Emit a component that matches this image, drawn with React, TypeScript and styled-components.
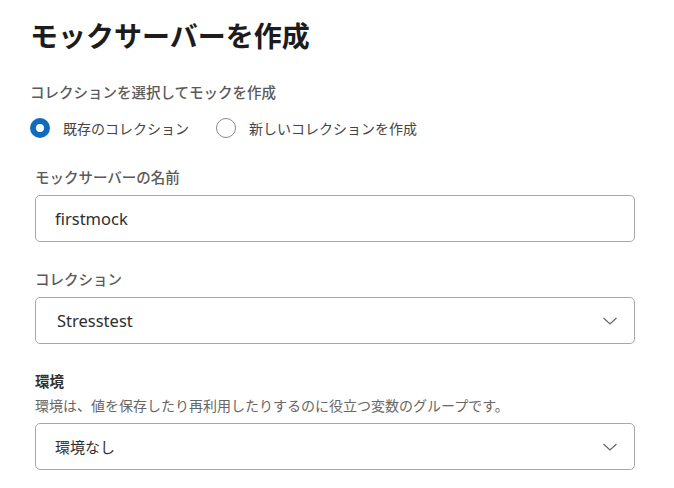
import React, { useState } from 'react';
import styled, { createGlobalStyle } from 'styled-components';

const GlobalStyle = createGlobalStyle`
  body {
    margin: 0;
    background: #ffffff;
    font-family: "Noto Sans", "Noto Sans CJK JP", sans-serif;
  }
`;

const Page = styled.div`
  padding: 17px 0 0 30px;
  width: 605px;
`;

const Title = styled.h1`
  margin: 0;
  font-size: 28px;
  line-height: 36px;
  font-weight: 700;
  color: #1c1c1c;
  font-family: "Noto Sans CJK JP", sans-serif;
`;

const SubHeading = styled.div`
  margin-top: 29px;
  font-size: 14.5px;
  line-height: 20px;
  font-weight: 500;
  color: #5a5a5a;
  font-family: "Noto Sans CJK JP", sans-serif;
`;

const RadioRow = styled.div`
  margin-top: 16px;
  display: flex;
  align-items: center;
  gap: 27px;
`;

const RadioOption = styled.label`
  display: flex;
  align-items: center;
  gap: 13px;
  cursor: pointer;
  font-size: 14px;
  line-height: 20px;
  color: #444;
  font-family: "Noto Sans CJK JP", sans-serif;
`;

const RadioCircle = styled.span<{ checked: boolean }>`
  box-sizing: border-box;
  width: 20px;
  height: 20px;
  flex-shrink: 0;
  border-radius: 50%;
  border: ${(p) => (p.checked ? '6px solid #0f6cbd' : '1px solid #8a8a8a')};
  background: #fff;
`;

const Form = styled.div`
  padding-left: 5px;
  margin-top: 29px;
  display: flex;
  flex-direction: column;
  gap: 27px;
`;

const Field = styled.div`
  display: flex;
  flex-direction: column;
`;

const Label = styled.div<{ strong?: boolean }>`
  font-size: 14.5px;
  line-height: 20px;
  font-weight: ${(p) => (p.strong ? 700 : 500)};
  color: ${(p) => (p.strong ? '#333' : '#5a5a5a')};
  font-family: "Noto Sans CJK JP", sans-serif;
`;

const Hint = styled.div`
  margin-top: 4px;
  font-size: 14px;
  line-height: 20px;
  color: #666;
  font-family: "Noto Sans CJK JP", sans-serif;
`;

const Box = styled.div`
  margin-top: 8px;
  box-sizing: border-box;
  height: 47px;
  border: 1px solid #a8a8a8;
  border-radius: 5px;
  display: flex;
  align-items: center;
  padding: 0 16px 0 19px;
  background: #fff;
`;

const TextInput = styled.input`
  border: none;
  outline: none;
  padding: 0;
  width: 100%;
  font-family: "Noto Sans", sans-serif;
  font-size: 16.5px;
  color: #2e2e2e;
  background: transparent;
`;

const SelectValue = styled.span<{ pad?: number; cjk?: boolean }>`
  flex: 1;
  padding-left: ${(p) => p.pad ?? 0}px;
  font-size: ${(p) => (p.cjk ? '15px' : '16.5px')};
  color: #2e2e2e;
  font-family: "Noto Sans", "Noto Sans CJK JP", sans-serif;
`;

const Chevron = () => (
  <svg width="16" height="10" viewBox="0 0 16 10">
    <path d="M1.5 2 L8 8 L14.5 2" fill="none" stroke="#666" strokeWidth="1.2" />
  </svg>
);

export default function App() {
  const [mode, setMode] = useState<'existing' | 'new'>('existing');
  const [name, setName] = useState('firstmock');

  return (
    <Page>
      <GlobalStyle />
      <Title>モックサーバーを作成</Title>
      <SubHeading>コレクションを選択してモックを作成</SubHeading>
      <RadioRow>
        <RadioOption onClick={() => setMode('existing')}>
          <RadioCircle checked={mode === 'existing'} />
          既存のコレクション
        </RadioOption>
        <RadioOption onClick={() => setMode('new')}>
          <RadioCircle checked={mode === 'new'} />
          新しいコレクションを作成
        </RadioOption>
      </RadioRow>
      <Form>
        <Field>
          <Label>モックサーバーの名前</Label>
          <Box>
            <TextInput value={name} onChange={(e) => setName(e.target.value)} />
          </Box>
        </Field>
        <Field>
          <Label>コレクション</Label>
          <Box>
            <SelectValue pad={2}>Stresstest</SelectValue>
            <Chevron />
          </Box>
        </Field>
        <Field>
          <Label strong>環境</Label>
          <Hint>環境は、値を保存したり再利用したりするのに役立つ変数のグループです。</Hint>
          <Box>
            <SelectValue cjk>環境なし</SelectValue>
            <Chevron />
          </Box>
        </Field>
      </Form>
    </Page>
  );
}
